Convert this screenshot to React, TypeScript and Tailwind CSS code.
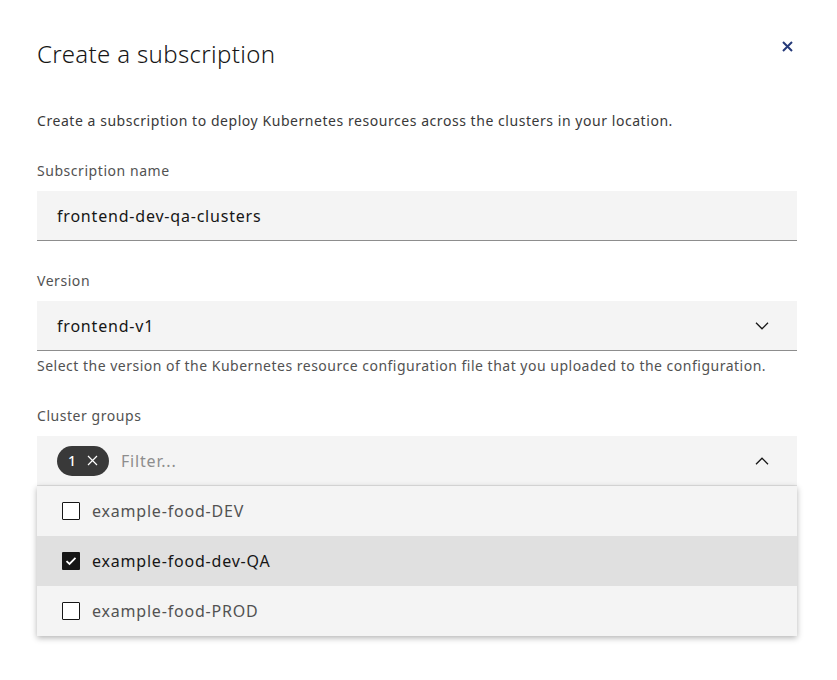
import { useState } from "react";

const groups = ["example-food-DEV", "example-food-dev-QA", "example-food-PROD"];

function Checkbox({ checked }: { checked: boolean }) {
  if (checked) {
    return (
      <span className="flex h-[18px] w-[18px] shrink-0 items-center justify-center rounded-[1px] bg-[#161616]">
        <svg width="12" height="10" viewBox="0 0 12 10" fill="none">
          <path d="M1.5 5.2 L4.5 8 L10.5 1.8" stroke="#ffffff" strokeWidth="1.8" />
        </svg>
      </span>
    );
  }
  return <span className="h-[18px] w-[18px] shrink-0 rounded-[1px] border border-[#161616] bg-white" />;
}

function Chevron({ up }: { up?: boolean }) {
  return (
    <svg width="14" height="8" viewBox="0 0 14 8" fill="none" className="shrink-0">
      <path d={up ? "M1 7.2 L7 1.2 L13 7.2" : "M1 0.8 L7 6.8 L13 0.8"} stroke="#161616" strokeWidth="1.3" />
    </svg>
  );
}

export default function App() {
  const [selected] = useState<string[]>(["example-food-dev-QA"]);

  return (
    <div className="min-h-[680px] w-[837px] bg-white font-['Noto_Sans',sans-serif] text-[#161616]">
      <div className="pl-[37px] pr-[40px] pt-[38px]">
        <div className="flex items-start justify-between">
          <h1 className="text-[24px] font-light leading-[32px] tracking-[0.35px] text-[#161616]">
            Create a subscription
          </h1>
          <button className="mr-[3px] mt-[1px] flex h-[14px] w-[14px] items-center justify-center">
            <svg width="11" height="11" viewBox="0 0 11 11" fill="none">
              <path d="M1 1 L10 10 M10 1 L1 10" stroke="#263a7a" strokeWidth="2" />
            </svg>
          </button>
        </div>

        <p className="mt-[42px] text-[14px] leading-[18px] tracking-[0.55px] text-[#393939]">
          Create a subscription to deploy Kubernetes resources across the clusters in your location.
        </p>

        <div className="mt-[32px]">
          <label className="block text-[14px] leading-[18px] tracking-[0.55px] text-[#525252]">
            Subscription name
          </label>
          <div className="mt-[11px] flex h-[50px] items-center border-b border-[#8d8d8d] bg-[#f4f4f4] px-[20px] text-[16px] tracking-[0.8px] text-[#161616]">
            frontend-dev-qa-clusters
          </div>
        </div>

        <div className="mt-[31px]">
          <label className="block text-[14px] leading-[18px] tracking-[0.55px] text-[#525252]">
            Version
          </label>
          <div className="mt-[11px] flex h-[50px] items-center justify-between border-b border-[#8d8d8d] bg-[#f4f4f4] pl-[20px] pr-[28px] text-[16px] tracking-[0.8px] text-[#161616]">
            <span>frontend-v1</span>
            <Chevron />
          </div>
          <p className="mt-[6px] text-[14px] leading-[18px] tracking-[0.5px] text-[#525252]">
            Select the version of the Kubernetes resource configuration file that you uploaded to the configuration.
          </p>
        </div>

        <div className="mt-[32px]">
          <label className="block text-[14px] leading-[18px] tracking-[0.55px] text-[#525252]">
            Cluster groups
          </label>
          <div className="mt-[11px]">
            <div className="flex h-[50px] items-center justify-between border-b border-[#e0e0e0] bg-[#f4f4f4] pl-[20px] pr-[28px]">
              <div className="flex items-center gap-[12px]">
                <span className="flex h-[30px] items-center gap-[11px] rounded-full bg-[#393939] pl-[11px] pr-[11px] text-[14px] text-white">
                  <span className="font-medium">{selected.length}</span>
                  <svg width="11" height="11" viewBox="0 0 11 11" fill="none">
                    <path d="M1 1 L10 10 M10 1 L1 10" stroke="#ffffff" strokeWidth="1.2" />
                  </svg>
                </span>
                <span className="text-[16px] tracking-[0.8px] text-[#8d8d8d]">Filter...</span>
              </div>
              <Chevron up />
            </div>
            <ul className="bg-[#f4f4f4] shadow-[0_2px_6px_rgba(0,0,0,0.3)]">
              {groups.map((g) => {
                const on = selected.includes(g);
                return (
                  <li
                    key={g}
                    className={`flex h-[50px] items-center gap-[12px] px-[25px] text-[16px] tracking-[0.8px] ${
                      on ? "bg-[#e0e0e0] text-[#161616]" : "text-[#525252]"
                    }`}
                  >
                    <Checkbox checked={on} />
                    <span>{g}</span>
                  </li>
                );
              })}
            </ul>
          </div>
        </div>
      </div>
    </div>
  );
}
